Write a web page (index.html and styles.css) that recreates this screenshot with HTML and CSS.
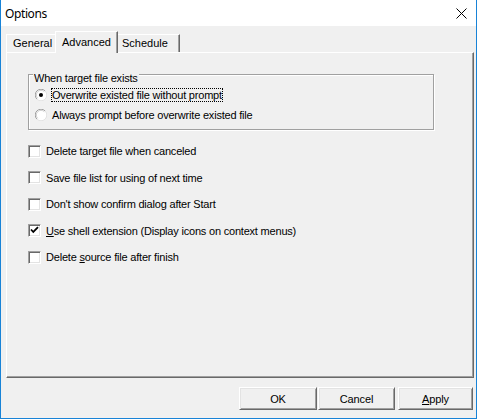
FILE: index.html
```html
<!DOCTYPE html>
<html>
<head>
<meta charset="utf-8">
<title>Options</title>
<link rel="stylesheet" href="styles.css">
</head>
<body>
<div class="window">
  <div class="titlebar">
    <span class="title">Options</span>
    <svg class="close" width="11" height="11" viewBox="0 0 11 11"><path d="M0.5 0.5L10.5 10.5M10.5 0.5L0.5 10.5" stroke="#000" stroke-width="1" fill="none"/></svg>
  </div>
  <div class="main">
    <div class="tabs">
      <div class="tab tab-general">General</div>
      <div class="tab tab-adv active">Advanced</div>
      <div class="tab tab-sched">Schedule</div>
    </div>
    <div class="panel">
      <div class="group">
        <span class="legend">When target file exists</span>
        <div class="radio-row">
          <svg class="radio" width="12" height="12" viewBox="0 0 12 12">
            <circle cx="6" cy="6" r="5.5" fill="#fff"/>
            <path d="M1.9 10.1A5.5 5.5 0 0 1 10.1 1.9" stroke="#a0a0a0" fill="none"/>
            <path d="M10.1 1.9A5.5 5.5 0 0 1 1.9 10.1" stroke="#e3e3e3" fill="none"/>
            <path d="M2.7 9.3A4.5 4.5 0 0 1 9.3 2.7" stroke="#d0d0d0" fill="none"/>
            <circle cx="6" cy="6" r="2" fill="#000"/>
          </svg>
          <span class="lbl focus">Overwrite existed file without prompt</span>
        </div>
        <div class="radio-row">
          <svg class="radio" width="12" height="12" viewBox="0 0 12 12">
            <circle cx="6" cy="6" r="5.5" fill="#fff"/>
            <path d="M1.9 10.1A5.5 5.5 0 0 1 10.1 1.9" stroke="#a0a0a0" fill="none"/>
            <path d="M10.1 1.9A5.5 5.5 0 0 1 1.9 10.1" stroke="#e3e3e3" fill="none"/>
            <path d="M2.7 9.3A4.5 4.5 0 0 1 9.3 2.7" stroke="#d0d0d0" fill="none"/>
          </svg>
          <span class="lbl">Always prompt before overwrite existed file</span>
        </div>
      </div>
      <div class="checks">
        <div class="check-row"><span class="box"></span><span class="lbl">Delete target file when canceled</span></div>
        <div class="check-row"><span class="box"></span><span class="lbl">Save file list for using of next time</span></div>
        <div class="check-row"><span class="box"></span><span class="lbl">Don't show confirm dialog after Start</span></div>
        <div class="check-row"><span class="box"><svg width="9" height="9" viewBox="0 0 9 9"><path d="M1 3.5L3.3 6L8 1.2" stroke="#000" stroke-width="1.8" fill="none"/></svg></span><span class="lbl"><u>U</u>se shell extension (Display icons on context menus)</span></div>
        <div class="check-row"><span class="box"></span><span class="lbl">Delete <u>s</u>ource file after finish</span></div>
      </div>
    </div>
    <div class="buttons">
      <button class="btn btn-ok">OK</button>
      <button class="btn btn-cancel">Cancel</button>
      <button class="btn btn-apply"><u>A</u>pply</button>
    </div>
  </div>
</div>
</body>
</html>
```
FILE: styles.css
```css
* { box-sizing: border-box; }
html, body { margin: 0; padding: 0; }
body {
  width: 477px;
  height: 419px;
  overflow: hidden;
  font-family: "Liberation Sans", Arial, sans-serif;
  font-size: 11px;
  color: #000;
  background: #f0f0f0;
}
.window {
  width: 477px;
  height: 419px;
  display: flex;
  flex-direction: column;
  border: 1px solid #1883d7;
  border-top: none;
  background: #f0f0f0;
}
.titlebar {
  height: 26px;
  flex: none;
  background: #fff;
  display: flex;
  align-items: center;
  justify-content: space-between;
  padding-left: 4px;
  padding-right: 9px;
}
.title {
  font-family: "Noto Sans", "Liberation Sans", sans-serif;
  font-size: 12px;
  letter-spacing: -0.4px;
}
.close { display: block; }
.main {
  flex: 1;
  display: flex;
  flex-direction: column;
  padding: 5px 2px 0 5px;
}
.tabs {
  display: flex;
  align-items: flex-end;
  height: 21px;
  flex: none;
  position: relative;
  z-index: 1;
}
.tab {
  height: 18px;
  line-height: 16px;
  border-top: 1px solid #fff;
  border-left: 1px solid #fff;
  border-right: 1px solid #696969;
  box-shadow: inset -1px 0 #a0a0a0;
  background: #f0f0f0;
  white-space: nowrap;
}
.tab-general { width: 49px; padding-left: 6px; border-right: none; box-shadow: none; }
.tab-adv { width: 63px; padding-left: 6px; }
.tab-sched { width: 62px; padding-left: 4px; border-left: none; }
.tab.active {
  height: 22px;
  line-height: 20px;
  margin-bottom: -1px;
}
.panel {
  width: 468px;
  height: 326px;
  flex: none;
  border-top: 1px solid #fff;
  border-left: 1px solid #fff;
  border-right: 1px solid #696969;
  border-bottom: 1px solid #696969;
  box-shadow: inset -1px -1px #a0a0a0;
  padding: 21px 0 0 21px;
}
.group {
  position: relative;
  width: 406px;
  height: 56px;
  border: 1px solid #a0a0a0;
  box-shadow: 1px 1px 0 #fff, inset 1px 1px 0 #fff;
  padding: 10px 0 0 6px;
}
.legend {
  position: absolute;
  top: -3px;
  left: 4px;
  line-height: 13px;
  padding: 0 1px;
  background: #f0f0f0;
  letter-spacing: -0.2px;
}
.radio-row {
  height: 20px;
  display: flex;
  align-items: center;
}
.radio { display: block; margin-right: 4px; flex: none; }
.lbl {
  letter-spacing: -0.2px;
  line-height: 12px;
  border: 1px solid transparent;
  white-space: nowrap;
}
.focus { border: 1px dotted #000; }
.checks {
  margin-top: 8px;
  display: flex;
  flex-direction: column;
}
.check-row {
  height: 26.5px;
  display: flex;
  align-items: center;
}
.box {
  width: 13px;
  height: 13px;
  flex: none;
  background: #fff;
  border: 1px solid;
  border-color: #a0a0a0 #fff #fff #a0a0a0;
  box-shadow: inset 1px 1px #696969, inset -1px -1px #e3e3e3;
  margin-right: 4px;
  display: flex;
  align-items: center;
  justify-content: center;
}
.box svg { display: block; }
.buttons {
  display: flex;
  justify-content: flex-end;
  padding: 9px 1px 0 0;
}
.btn {
  height: 23px;
  padding: 0;
  font-family: inherit;
  font-size: 11px;
  color: #000;
  background: #f0f0f0;
  border: 1px solid;
  border-color: #fff #696969 #696969 #fff;
  box-shadow: inset 1px 1px #e3e3e3, inset -1px -1px #a0a0a0;
  border-radius: 0;
  letter-spacing: -0.1px;
}
.btn-ok { width: 78px; margin-right: 1px; }
.btn-cancel { width: 77px; margin-right: 3px; }
.btn-apply { width: 75px; }
```
